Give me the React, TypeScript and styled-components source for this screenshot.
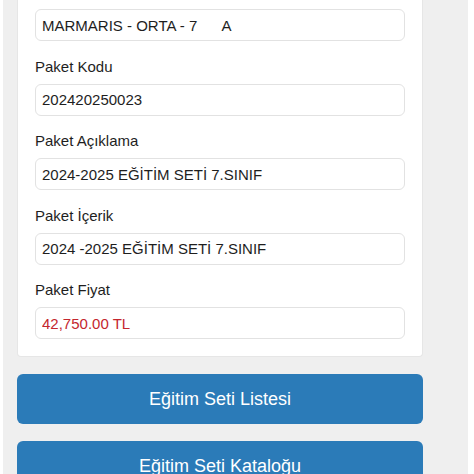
import React from "react";
import styled, { createGlobalStyle } from "styled-components";

const Global = createGlobalStyle`
  html, body { margin: 0; padding: 0; background: #ffffff; }
  body { font-family: "Liberation Sans", Arial, sans-serif; }
  * { box-sizing: border-box; }
`;

const Page = styled.div`
  margin-left: 3px;
  width: 465px;
  height: 474px;
  overflow: hidden;
  background: #efefef;
  padding: 0 14px;
  display: flex;
  flex-direction: column;
  gap: 17px;
`;

const Card = styled.div`
  width: 406px;
  background: #ffffff;
  border: 1px solid #e6e6e6;
  border-top: none;
  border-radius: 0 0 4px 4px;
  padding: 9px 17px 17px 17px;
  display: flex;
  flex-direction: column;
`;

const Group = styled.div<{ $last?: boolean }>`
  display: flex;
  flex-direction: column;
  margin-bottom: ${(p) => (p.$last ? 0 : 15.5)}px;
`;

const Label = styled.label`
  font-size: 15px;
  line-height: 20px;
  color: #1e1e1e;
  margin-top: 0;
  margin-bottom: 7px;
`;

const Field = styled.input<{ $tone?: "price" }>`
  height: 32px;
  width: 100%;
  border: 1px solid #e2e2e2;
  border-radius: 6px;
  padding: 0 6px;
  font-family: "Liberation Sans", Arial, sans-serif;
  font-size: 15px;
  color: ${(p) => (p.$tone === "price" ? "#c4262e" : "#1e1e1e")};
  background: #ffffff;
  outline: none;
  white-space: pre;
`;

const ActionButton = styled.button`
  width: 406px;
  height: 50px;
  flex-shrink: 0;
  border: none;
  border-radius: 6px;
  background: #2b7bb8;
  color: #ffffff;
  font-family: "Liberation Sans", Arial, sans-serif;
  font-size: 18px;
  cursor: pointer;
`;

const fields = [
  { label: null, value: "MARMARIS - ORTA - 7      A" },
  { label: "Paket Kodu", value: "202420250023" },
  { label: "Paket Açıklama", value: "2024-2025 EĞİTİM SETİ 7.SINIF" },
  { label: "Paket İçerik", value: "2024 -2025 EĞİTİM SETİ 7.SINIF" },
  { label: "Paket Fiyat", value: "42,750.00 TL", tone: "price" as const },
];

export default function App() {
  return (
    <>
      <Global />
      <Page>
        <Card>
          {fields.map((f, i) => (
            <Group key={i} $last={i === fields.length - 1}>
              {f.label && <Label>{f.label}</Label>}
              <Field readOnly value={f.value} $tone={f.tone} />
            </Group>
          ))}
        </Card>
        <ActionButton>Eğitim Seti Listesi</ActionButton>
        <ActionButton>Eğitim Seti Kataloğu</ActionButton>
      </Page>
    </>
  );
}
